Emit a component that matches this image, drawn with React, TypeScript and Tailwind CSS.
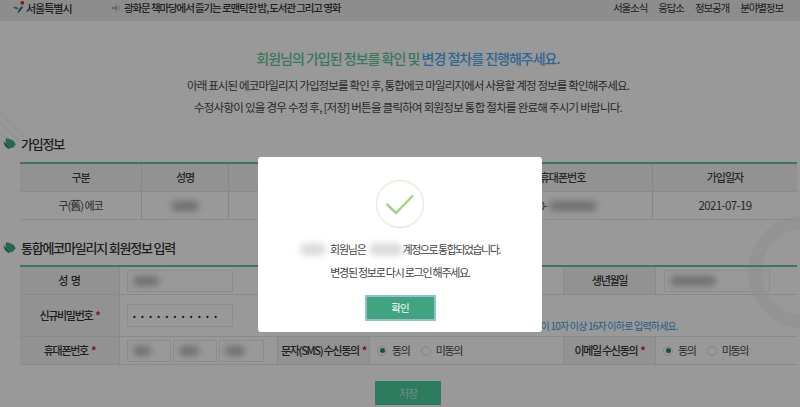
import React from 'react'

const font = { fontFamily: '"Noto Sans CJK KR", "Noto Sans", sans-serif' }

const Leaf = () => (
  <svg width="13" height="12" viewBox="0 0 13 12" className="shrink-0">
    <path d="M3 0.5 C8 0.5 12 3 12.5 6.5 C11 9.5 8 11 5.5 10 C3 8.5 2 4 3 0.5 Z" fill="#3fae87" />
    <path d="M0.5 3 C1 7 3 10.5 7 11 C5 9 3 6 0.5 3 Z" fill="#1f7c5c" />
  </svg>
)

const Blob = ({ w, h = 10, light }: { w: number; h?: number; light?: boolean }) => (
  <div className={`${light ? 'bg-[#dcdcdc]' : 'bg-[#bdbdbd]'} blur-[3px] rounded-full`} style={{ width: w, height: h }} />
)

const Req = () => <span className="ml-[3px] text-[#e0161e] font-bold">*</span>

const Radio = ({ checked }: { checked?: boolean }) => (
  <span className="flex items-center justify-center size-[10px] rounded-full border border-[#dcdcdc] bg-white">
    {checked && <span className="size-[5px] rounded-full bg-[#1f8a63]" />}
  </span>
)

const Agree = () => (
  <div className="flex items-center pl-[7px] text-[11px] tracking-[-1.3px] text-[#444] whitespace-nowrap">
    <Radio checked />
    <span className="ml-[5px]">동의</span>
    <span className="ml-[11px]"><Radio /></span>
    <span className="ml-[5px]">미동의</span>
  </div>
)

const inputBox = 'border border-[#ececec] flex items-center px-[5px]'
const labelCell = 'flex items-center justify-center bg-[#f3f3f3] border-r border-[#e6e6e6] text-[11px] tracking-[-1.3px] font-medium text-[#333] whitespace-nowrap'
const cols1 = 'grid h-[28px] grid-cols-[122px_87px_114px_130px_180px_144px] border-b border-[#e6e6e6]'
const headCell = 'flex items-center justify-center border-r border-[#e2e2e2]'

const App = () => {
  return (
    <div className="relative h-[407px] w-[800px] overflow-hidden bg-white" style={font}>
      {/* background decoration */}
      <svg className="absolute left-0 top-0" width="800" height="407" fill="none">
        <circle cx="805" cy="272" r="50" stroke="#f5f7f8" strokeWidth="14" />
        <path d="M0 112 L24 136 M0 122 L20 142 M0 132 L16 148" stroke="#f7f7f7" strokeWidth="4" />
      </svg>

      <div className="relative">
        <header className="flex h-[21px] items-center bg-[#ececec] pb-[5px] pl-[12px] pr-[17px]">
          <svg width="14" height="15" viewBox="0 0 15 15" className="mb-[2px]">
            <circle cx="11" cy="2.5" r="2" fill="#e2232e" />
            <path d="M12 6 C11 10 8 12 6 14 C7 10 8 7 12 6 Z" fill="#1f6fb5" />
            <path d="M1 7 C3 6 6 7 7 9 C5 10 3 9 1 7 Z" fill="#2e9e58" />
          </svg>
          <span className="w-[44px] text-[11px] tracking-[-1px] font-medium whitespace-nowrap text-[#333]">서울특별시</span>
          <svg width="9" height="8" viewBox="0 0 9 8" className="ml-[42px]">
            <path d="M0 3 H2 L5 1 V7 L2 5 H0 Z" fill="#aaa" />
            <path d="M6.5 2 Q8 4 6.5 6" stroke="#aaa" fill="none" />
          </svg>
          <span className="ml-[3px] text-[10.5px] tracking-[-1.1px] font-medium whitespace-nowrap text-[#333]">광화문 책마당에서 즐기는 로맨틱한 밤, 도서관 그리고 영화</span>
          <nav className="ml-auto flex gap-[11px] text-[10.5px] tracking-[-1.1px] text-[#333]">
            <span>서울소식</span>
            <span>응답소</span>
            <span>정보공개</span>
            <span>분야별정보</span>
          </nav>
        </header>

        <section className="pl-[16px] pt-[25px] text-center">
          <h1 className="text-[14px] tracking-[-1px] leading-[24px] font-medium text-[#5cc79b]">
            회원님의 가입된 정보를 확인 및 <span className="text-[#4baaf0]">변경 절차를 진행해주세요.</span>
          </h1>
          <p className="mt-[4px] text-[11.5px] tracking-[-0.85px] leading-[22px] text-[#444]">아래 표시된 에코마일리지 가입정보를 확인 후, 통합에코 마일리지에서 사용할 계정 정보를 확인해주세요.</p>
          <p className="text-[11.5px] tracking-[-0.75px] leading-[22px] text-[#444]">수정사항이 있을 경우 수정 후, [저장] 버튼을 클릭하여 회원정보 통합 절차를 완료해 주시기 바랍니다.</p>
        </section>

        <div className="px-[3px]">
          <div className="mt-[16px] flex h-[20px] items-center gap-[5px] text-[13px] tracking-[-1.2px] font-medium text-[#333]">
            <Leaf />
            <span>가입정보</span>
          </div>
          <div className="ml-[17px] mt-[8px] border-t-2 border-[#66c2a3] text-[11px] tracking-[-1px] text-[#444]">
            <div className={`${cols1} bg-[#f3f3f3] font-medium`}>
              <div className={headCell}>구분</div>
              <div className={headCell}>성명</div>
              <div className={headCell} />
              <div className={headCell} />
              <div className={headCell}>휴대폰번호</div>
              <div className="flex items-center justify-center">가입일자</div>
            </div>
            <div className={cols1}>
              <div className={headCell}>구(舊) 에코</div>
              <div className={headCell}><Blob w={28} /></div>
              <div className={headCell} />
              <div className={headCell} />
              <div className={`${headCell} gap-[2px]`}>
                <span>010-</span><Blob w={48} />
              </div>
              <div className="flex items-center justify-center text-[11.5px] tracking-[-0.6px]">2021-07-19</div>
            </div>
          </div>

          <div className="mt-[18px] flex h-[20px] items-center gap-[5px] text-[13px] tracking-[-1.2px] font-medium text-[#333]">
            <Leaf />
            <span>통합에코마일리지 회원정보 입력</span>
          </div>
          <div className="ml-[17px] mt-[7px] border-t-2 border-[#66c2a3]">
            <div className="grid h-[28px] grid-cols-[100px_157px_93px_193px_93px_141px] border-b border-[#e6e6e6]">
              <div className={labelCell}><span className="tracking-normal">성 명</span></div>
              <div className="flex items-center pl-[7px]">
                <div className={`${inputBox} h-[22px] w-[106px]`}><Blob w={26} /></div>
              </div>
              <div className={labelCell} />
              <div />
              <div className={`${labelCell} border-l`}>생년월일</div>
              <div className="flex items-center pl-[8px]">
                <div className={`${inputBox} h-[22px] w-[106px]`}><Blob w={46} /></div>
              </div>
            </div>
            <div className="grid h-[42px] grid-cols-[100px_157px_520px] border-b border-[#e6e6e6]">
              <div className={labelCell}><span>신규비밀번호<Req /></span></div>
              <div className="flex items-center pl-[7px]">
                <div className={`${inputBox} h-[23px] w-[106px] text-[8px] tracking-[5.4px] whitespace-nowrap text-[#222]`}>•••••••••••</div>
              </div>
              <div className="flex items-end justify-end pb-[3px] pr-[119px] text-[10px] tracking-[-0.8px] text-[#3a9ce0] whitespace-nowrap">
                영문, 숫자, 특수문자를 공백 없이 10자 이상 16자 이하로 입력하세요.
              </div>
            </div>
            <div className="grid h-[28px] grid-cols-[100px_157px_93px_193px_93px_141px] border-b border-[#e6e6e6]">
              <div className={labelCell}><span>휴대폰번호<Req /></span></div>
              <div className="flex items-center gap-[2px] pl-[7px]">
                <div className={`${inputBox} h-[22px] w-[44px]`}><Blob w={18} /></div>
                <div className={`${inputBox} h-[22px] w-[44px]`}><Blob w={20} /></div>
                <div className={`${inputBox} h-[22px] w-[45px]`}><Blob w={20} /></div>
              </div>
              <div className={`${labelCell} border-l`}><span>문자(SMS) 수신동의<Req /></span></div>
              <Agree />
              <div className={`${labelCell} border-l`}><span>이메일 수신동의<Req /></span></div>
              <Agree />
            </div>
          </div>
          <div className="mt-[16px] flex justify-center pl-[16px]">
            <button className="h-[24px] w-[66px] bg-[#4ecf9f] text-[11px] tracking-[-1px] text-white/60">저장</button>
          </div>
        </div>
      </div>

      <div className="absolute inset-0 flex justify-center bg-black/40 pt-[157px]">
        <div className="flex h-[175px] w-[284px] flex-col items-center rounded-[3px] bg-white pt-[22px] text-[11px] tracking-[-1.25px] text-[#444]">
          <svg width="50" height="50" viewBox="0 0 50 50" fill="none">
            <circle cx="25" cy="25" r="23.5" stroke="#e3f1da" strokeWidth="1.5" />
            <path d="M11.5 25 L21 34 L38 16.5" stroke="#a0d583" strokeWidth="2.5" />
          </svg>
          <div className="mt-[9px] flex h-[22px] items-center whitespace-nowrap">
            <Blob w={26} h={13} light />
            <span className="ml-[4px]">회원님은</span>
            <span className="ml-[3px]"><Blob w={34} h={13} light /></span>
            <span className="tracking-[-1.5px]">계정으로 통합되었습니다.</span>
          </div>
          <div className="mt-[1px] flex h-[22px] items-center">변경된 정보로 다시 로그인 해주세요.</div>
          <button className="mt-[12px] h-[26px] w-[71px] border-2 border-[#8fc3c8] bg-[#3fa47f] text-[10.5px] tracking-[-1px] text-white">확인</button>
        </div>
      </div>
    </div>
  )
}

export default App
